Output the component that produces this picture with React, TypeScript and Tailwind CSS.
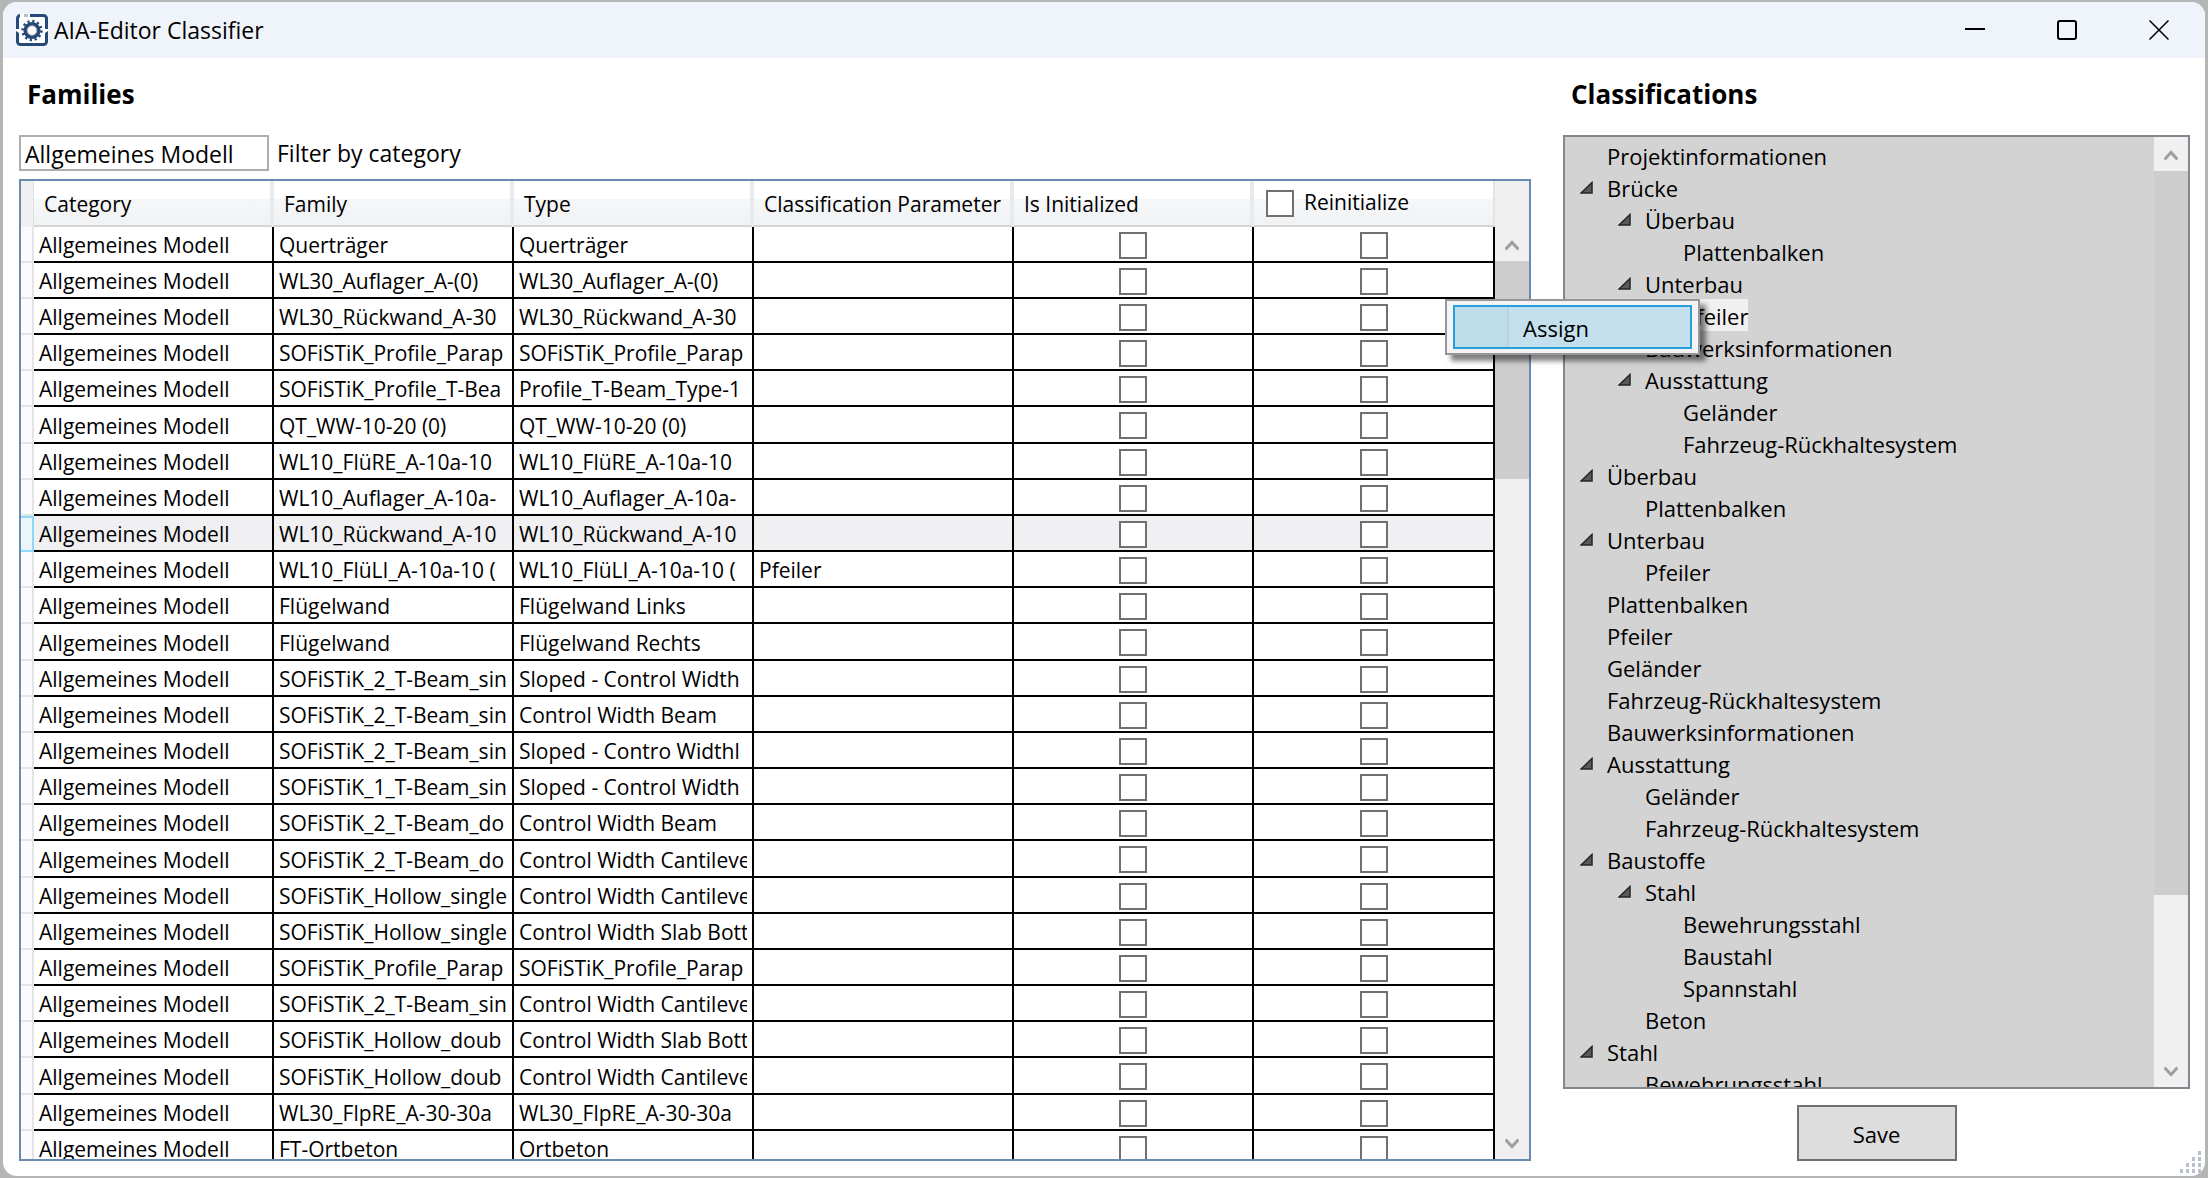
import { useState } from "react";

interface FamilyRow {
  family: string;
  type: string;
  parameter?: string;
  active?: boolean;
}

interface TreeItem {
  label: string;
  level: 0 | 1 | 2;
  expanded?: boolean;
  selected?: boolean;
}

const CATEGORY = "Allgemeines Modell";

const rows: FamilyRow[] = [
  { family: "Querträger", type: "Querträger" },
  { family: "WL30_Auflager_A-(0)", type: "WL30_Auflager_A-(0)" },
  { family: "WL30_Rückwand_A-30", type: "WL30_Rückwand_A-30" },
  { family: "SOFiSTiK_Profile_Parap", type: "SOFiSTiK_Profile_Parap" },
  { family: "SOFiSTiK_Profile_T-Bea", type: "Profile_T-Beam_Type-1" },
  { family: "QT_WW-10-20 (0)", type: "QT_WW-10-20 (0)" },
  { family: "WL10_FlüRE_A-10a-10", type: "WL10_FlüRE_A-10a-10" },
  { family: "WL10_Auflager_A-10a-", type: "WL10_Auflager_A-10a-" },
  { family: "WL10_Rückwand_A-10", type: "WL10_Rückwand_A-10", active: true },
  { family: "WL10_FlüLI_A-10a-10 (", type: "WL10_FlüLI_A-10a-10 (", parameter: "Pfeiler" },
  { family: "Flügelwand", type: "Flügelwand Links" },
  { family: "Flügelwand", type: "Flügelwand Rechts" },
  { family: "SOFiSTiK_2_T-Beam_sin", type: "Sloped - Control Width" },
  { family: "SOFiSTiK_2_T-Beam_sin", type: "Control Width Beam" },
  { family: "SOFiSTiK_2_T-Beam_sin", type: "Sloped - Contro Widthl" },
  { family: "SOFiSTiK_1_T-Beam_sin", type: "Sloped - Control Width" },
  { family: "SOFiSTiK_2_T-Beam_do", type: "Control Width Beam" },
  { family: "SOFiSTiK_2_T-Beam_do", type: "Control Width Cantileve" },
  { family: "SOFiSTiK_Hollow_single", type: "Control Width Cantileve" },
  { family: "SOFiSTiK_Hollow_single", type: "Control Width Slab Bott" },
  { family: "SOFiSTiK_Profile_Parap", type: "SOFiSTiK_Profile_Parap" },
  { family: "SOFiSTiK_2_T-Beam_sin", type: "Control Width Cantileve" },
  { family: "SOFiSTiK_Hollow_doub", type: "Control Width Slab Bott" },
  { family: "SOFiSTiK_Hollow_doub", type: "Control Width Cantileve" },
  { family: "WL30_FlpRE_A-30-30a", type: "WL30_FlpRE_A-30-30a" },
  { family: "FT-Ortbeton", type: "Ortbeton" },
];

const tree: TreeItem[] = [
  { label: "Projektinformationen", level: 0 },
  { label: "Brücke", level: 0, expanded: true },
  { label: "Überbau", level: 1, expanded: true },
  { label: "Plattenbalken", level: 2 },
  { label: "Unterbau", level: 1, expanded: true },
  { label: "Pfeiler", level: 2, selected: true },
  { label: "Bauwerksinformationen", level: 1 },
  { label: "Ausstattung", level: 1, expanded: true },
  { label: "Geländer", level: 2 },
  { label: "Fahrzeug-Rückhaltesystem", level: 2 },
  { label: "Überbau", level: 0, expanded: true },
  { label: "Plattenbalken", level: 1 },
  { label: "Unterbau", level: 0, expanded: true },
  { label: "Pfeiler", level: 1 },
  { label: "Plattenbalken", level: 0 },
  { label: "Pfeiler", level: 0 },
  { label: "Geländer", level: 0 },
  { label: "Fahrzeug-Rückhaltesystem", level: 0 },
  { label: "Bauwerksinformationen", level: 0 },
  { label: "Ausstattung", level: 0, expanded: true },
  { label: "Geländer", level: 1 },
  { label: "Fahrzeug-Rückhaltesystem", level: 1 },
  { label: "Baustoffe", level: 0, expanded: true },
  { label: "Stahl", level: 1, expanded: true },
  { label: "Bewehrungsstahl", level: 2 },
  { label: "Baustahl", level: 2 },
  { label: "Spannstahl", level: 2 },
  { label: "Beton", level: 1 },
  { label: "Stahl", level: 0, expanded: true },
  { label: "Bewehrungsstahl", level: 1 },
];

const indent = ["pl-[12px]", "pl-[50px]", "pl-[88px]"];

const checkboxClass =
  "block h-[27px] w-[28px] shrink-0 appearance-none border-2 border-[#707070] bg-white checked:bg-[#707070]";

const headerClass =
  "border-r-4 border-b-2 border-r-[#e9eaeb] border-b-[#d3d4d5] pt-[4px] pl-[10px] text-left font-normal whitespace-nowrap";

function AppIcon() {
  return (
    <svg viewBox="0 0 32 32" className="size-8" aria-hidden="true">
      <rect x="1.5" y="1.5" width="29" height="29" rx="3" fill="#fff" stroke="#264a78" strokeWidth="3" />
      <path d="M4 0h10v3H4z" fill="#fff" />
      <path d="M8 0h4v3H8z" fill="#b9bec8" />
      <path d="M0 15h3v4l-3-2zM32 15h-3v4l3-2z" fill="#fff" />
      <circle cx="16" cy="16.5" r="9.2" fill="none" stroke="#264a78" strokeWidth="3" strokeDasharray="2.1 2.717" />
      <circle cx="16" cy="16.5" r="6.6" fill="none" stroke="#264a78" strokeWidth="4" />
      <circle cx="16" cy="16.5" r="4.8" fill="#fff" stroke="#a9a9a9" strokeWidth="1" />
    </svg>
  );
}

function Chevron({ down }: { down?: boolean }) {
  return (
    <svg viewBox="0 0 14 11" className="h-[11px] w-[14px]" fill="none" stroke="#9f9f9f" strokeWidth="3" aria-hidden="true">
      <path d={down ? "M0.5 1.5 7 8.5 13.5 1.5" : "M0.5 9.5 7 2.5 13.5 9.5"} />
    </svg>
  );
}

function ScrollBar({ thumbClass }: { thumbClass: string }) {
  return (
    <div className="flex min-h-0 w-[34px] flex-1 flex-col bg-[#f0f0f0]">
      <button type="button" aria-label="Scroll up" className="flex h-[34px] shrink-0 items-center justify-center pt-[2px]">
        <Chevron />
      </button>
      <div className="min-h-0 flex-1">
        <div className={`bg-[#cdcdcd] ${thumbClass}`} />
      </div>
      <button type="button" aria-label="Scroll down" className="flex h-[34px] shrink-0 items-center justify-center pt-[2px]">
        <Chevron down />
      </button>
    </div>
  );
}

function TitleBar() {
  return (
    <header className="flex h-14 shrink-0 items-center bg-[#eff3fa] pl-[13px]">
      <AppIcon />
      <h1 className="flex-1 pl-[6px] text-[23px]">AIA-Editor Classifier</h1>
      <button type="button" aria-label="Minimize" className="flex h-full w-[92px] items-center justify-center">
        <svg viewBox="0 0 20 20" className="size-5" stroke="#000" strokeWidth="2">
          <path d="M0 9h20" />
        </svg>
      </button>
      <button type="button" aria-label="Maximize" className="flex h-full w-[92px] items-center justify-center">
        <svg viewBox="0 0 20 20" className="size-5" fill="none" stroke="#000" strokeWidth="2">
          <rect x="1" y="1" width="18" height="18" rx="2" />
        </svg>
      </button>
      <button type="button" aria-label="Close" className="flex h-full w-[92px] items-center justify-center">
        <svg viewBox="0 0 20 20" className="size-5" stroke="#000" strokeWidth="1.5">
          <path d="M0.5 0.5l19 19M19.5 0.5l-19 19" />
        </svg>
      </button>
    </header>
  );
}

function FamilyTable() {
  const [reinit, setReinit] = useState<boolean[]>(rows.map(() => false));

  const toggle = (i: number) => setReinit(reinit.map((v, j) => (j === i ? !v : v)));
  const toggleAll = (value: boolean) => setReinit(rows.map(() => value));

  return (
    <div className="mt-2 flex min-h-0 flex-1 border-2 border-[#688caf]">
      <div className="min-w-0 flex-1 overflow-hidden">
        <table className="w-full table-fixed border-separate border-spacing-0 text-[21px]">
          <colgroup>
            <col className="w-[13px]" />
            <col className="w-[240px]" />
            <col className="w-[240px]" />
            <col className="w-[240px]" />
            <col className="w-[260px]" />
            <col className="w-[240px]" />
            <col />
          </colgroup>
          <thead>
            <tr className="h-[46px] bg-linear-to-b from-white from-40% via-[#f6f7f9] via-40% to-[#f0f1f3]">
              <td className="border-r border-[#dfe0e1] bg-[#f0f0f0]" />
              <th className={headerClass}>Category</th>
              <th className={headerClass}>Family</th>
              <th className={headerClass}>Type</th>
              <th className={headerClass}>Classification Parameter</th>
              <th className={headerClass}>Is Initialized</th>
              <th className="border-r-2 border-b-2 border-r-[#e3e4e6] border-b-[#d3d4d5] pl-[12px] text-left font-normal">
                <label className="flex items-center gap-[10px]">
                  <input
                    type="checkbox"
                    checked={reinit.every(Boolean)}
                    onChange={(e) => toggleAll(e.target.checked)}
                    className={checkboxClass}
                  />
                  Reinitialize
                </label>
              </th>
            </tr>
          </thead>
          <tbody>
            {rows.map((row, i) => (
              <tr
                key={i}
                className={`h-[36px] leading-[32px] nth-[6n]:h-[37px] *:border-r-2 *:border-b-2 *:border-black *:p-0 *:pt-[2px] ${row.active ? "bg-[#f0eff1]" : "bg-white"}`}
              >
                <td
                  className={
                    row.active
                      ? "border-[#8fd8f8]! bg-[#eaf6fc] shadow-[inset_0_2px_0_#8fd8f8]"
                      : "border-[#e3e4e6]! bg-[#fbfbfb]"
                  }
                />
                <td className="overflow-hidden pl-[5px]! whitespace-nowrap">{CATEGORY}</td>
                <td className="pr-[5px]! pl-[5px]!">
                  <div className="overflow-hidden whitespace-nowrap">{row.family}</div>
                </td>
                <td className="pr-[5px]! pl-[5px]!">
                  <div className="overflow-hidden whitespace-nowrap">{row.type}</div>
                </td>
                <td className="pl-[5px]!">{row.parameter}</td>
                <td>
                  <input type="checkbox" aria-label={`Initialized ${i + 1}`} className={`mx-auto ${checkboxClass}`} />
                </td>
                <td>
                  <input
                    type="checkbox"
                    aria-label={`Reinitialize ${i + 1}`}
                    checked={reinit[i]}
                    onChange={() => toggle(i)}
                    className={`mx-auto ${checkboxClass}`}
                  />
                </td>
              </tr>
            ))}
          </tbody>
        </table>
      </div>
      <div className="flex flex-col bg-[#f0f0f0] pt-[46px]">
        <ScrollBar thumbClass="h-[218px]" />
      </div>
    </div>
  );
}

function ClassificationTree() {
  return (
    <div className="flex min-h-0 flex-1 border-2 border-[#828790] bg-[#d3d3d3]">
      <div className="min-w-0 flex-1 overflow-hidden pt-[2px]">
        <ul role="tree" className="text-[22px] leading-[30px]">
          {tree.map((item, i) => (
            <li
              key={i}
              role="treeitem"
              aria-expanded={item.expanded}
              aria-selected={!!item.selected}
              className={`flex h-8 items-center ${indent[item.level]}`}
            >
              <span className="flex w-[27px] items-center pl-[3px]">
                {item.expanded && (
                  <svg viewBox="0 0 13 13" className="size-[13px]" aria-hidden="true">
                    <path d="M12 1.5V12H1z" fill="#595959" stroke="#262626" strokeWidth="1.5" />
                  </svg>
                )}
              </span>
              <span className={`pt-[2px] pl-[3px] ${item.selected ? "bg-[#f0f0f0]" : ""}`}>{item.label}</span>
            </li>
          ))}
        </ul>
      </div>
      <div className="flex flex-col">
        <ScrollBar thumbClass="h-[724px]" />
      </div>
    </div>
  );
}

function ContextMenu() {
  return (
    <div
      role="menu"
      className="absolute top-[241px] -left-[118px] w-[255px] border-2 border-[#979797] bg-[#f5f3f5] px-[6px] py-[4px] shadow-[6px_6px_5px_rgba(0,0,0,0.5)]"
    >
      <button
        type="button"
        role="menuitem"
        className="flex h-11 w-full items-center border-2 border-[#26a0da] bg-[#c4e0ee] text-left text-[22px]"
      >
        <span className="h-full w-[54px] border-r-2 border-[#b3d3e3] bg-[#bfdceb]" />
        <span className="pt-[2px] pl-[14px]">Assign</span>
      </button>
    </div>
  );
}

function ResizeGrip() {
  const dots = [0, 1, 2, 3].flatMap((r) => Array.from({ length: r + 1 }, (_, c) => [18 - c * 6, r * 6]));

  return (
    <svg viewBox="0 0 22 22" className="absolute right-[3px] bottom-[3px] size-[22px]" aria-hidden="true">
      {dots.map(([x, y]) => (
        <rect key={`${x}-${y}`} x={x} y={y} width="3" height="4" fill="#b8bfd0" />
      ))}
    </svg>
  );
}

export default function App() {
  const [filter, setFilter] = useState(CATEGORY);

  return (
    <div className="h-screen bg-[#b5b5b5] px-[3px] py-[2px] font-['Open_Sans',sans-serif] text-black">
      <div className="relative flex h-full flex-col overflow-hidden rounded-[14px] bg-white">
        <TitleBar />
        <main className="flex min-h-0 flex-1 gap-8 pr-[15px] pb-[15px] pl-[16px]">
          <section className="flex min-w-0 flex-1 flex-col">
            <h2 className="flex h-[77px] items-center pb-[4px] pl-[8px] text-[26px] font-bold">Families</h2>
            <div className="flex h-9 items-center gap-2 text-[23px]">
              <input
                id="category-filter"
                value={filter}
                onChange={(e) => setFilter(e.target.value)}
                className="h-9 w-[250px] border-2 border-[#abadb3] bg-white px-[4px] pt-[2px]"
              />
              <label htmlFor="category-filter">Filter by category</label>
            </div>
            <FamilyTable />
          </section>
          <section className="relative flex w-[627px] shrink-0 flex-col">
            <h2 className="flex h-[77px] items-center pb-[4px] pl-[8px] text-[26px] font-bold">Classifications</h2>
            <ClassificationTree />
            <div className="flex justify-center pt-4">
              <button type="button" className="h-14 w-[160px] border-2 border-[#707070] bg-[#dddddd] pt-[2px] text-[22px]">
                Save
              </button>
            </div>
            <ContextMenu />
          </section>
        </main>
        <ResizeGrip />
      </div>
    </div>
  );
}
